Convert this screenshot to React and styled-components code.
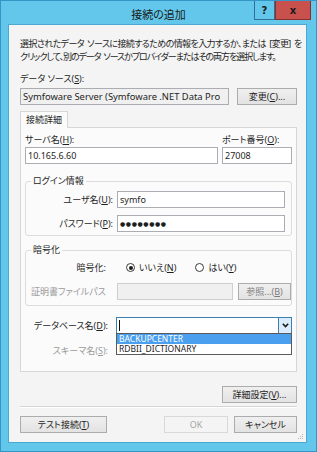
import styled, {createGlobalStyle} from "styled-components";

const GlobalStyle = createGlobalStyle`
  html, body { margin: 0; padding: 0; }
  body { width: 317px; height: 452px; overflow: hidden; background: #fff; }
  * { box-sizing: border-box; }
`

const Window = styled.div`
  width: 317px;
  height: 452px;
  background: #62c7ea;
  border: 1px solid #3595c6;
  display: flex;
  flex-direction: column;
  font-family: "Noto Sans", "Noto Sans CJK JP", sans-serif;
  font-size: 9px;
  font-feature-settings: "palt";
  color: #1e1e1e;
`
const TitleBar = styled.div`
  height: 23px;
  display: grid;
  grid-template-columns: 1fr auto 1fr;
`
const Title = styled.div`
  grid-column: 2;
  align-self: center;
  font-size: 11px;
  color: #1a1a1a;
  padding-top: 2px;
`
const Caption = styled.div`
  grid-column: 3;
  justify-self: end;
  align-self: start;
  display: flex;
  margin-right: 5px;
`
const CaptionButton = styled.div`
  width: ${({wide}) => wide ? 36 : 21}px;
  height: 19px;
  display: flex;
  align-items: center;
  justify-content: center;
  background: ${({close}) => close ? "#c9514d" : "#62c7ea"};
  border: 1px solid ${({close}) => close ? "#86302d" : "#2f7196"};
  border-top: none;
  font-family: "DejaVu Sans", sans-serif;
  font-weight: bold;
  font-size: 10px;
  color: #1b1b1b;
`
const Client = styled.div`
  position: relative;
  flex: 1;
  margin: 0 9px 8px 7px;
  background: #f4f4f4;
  border: 1px solid #4aa8d2;
  padding: 12px 9px 0 11px;
  display: flex;
  flex-direction: column;
`
const Desc = styled.p`
  margin: 0;
  line-height: 13px;
  white-space: nowrap;
  letter-spacing: ${({tight}) => tight}px;
  word-spacing: 1.5px;
`
const Label = styled.div`
  line-height: 13px;
  margin-top: ${({top}) => top || 0}px;
  color: ${({disabled}) => disabled ? "#9a9a9a" : "inherit"};
  text-align: ${({align}) => align || "left"};
  padding-right: ${({pr}) => pr || 0}px;
  padding-left: ${({pl}) => pl || 0}px;
  white-space: nowrap;
`
const SourceRow = styled.div`
  display: flex;
  align-items: center;
  gap: 8px;
  margin-top: 2px;
  height: 19px;
`
const TextBox = styled.div`
  width: ${({w}) => w ? `${w}px` : "auto"};
  height: 17px;
  background: ${({readOnly, disabled}) => readOnly || disabled ? "#f0f0f0" : "#fff"};
  border: 1px solid ${({disabled}) => disabled ? "#cfcfcf" : "#abadb3"};
  padding: 0 2px;
  line-height: 15px;
  white-space: nowrap;
  overflow: hidden;
  font-size: ${({latin}) => latin ? "9.4px" : "inherit"};
`
const Dots = styled.span`
  font-family: "DejaVu Sans", sans-serif;
  font-size: 6px;
  letter-spacing: 0.6px;
  vertical-align: 1px;
`
const Button = styled.div`
  width: ${({w}) => w}px;
  height: 17px;
  display: flex;
  align-items: center;
  justify-content: center;
  background: ${({disabled}) => disabled ? "#f4f4f4" : "linear-gradient(#efefef, #e3e3e3)"};
  border: 1px solid ${({disabled}) => disabled ? "#d9d9d9" : "#acacac"};
  color: ${({disabled, dim}) => disabled ? "#a6a6a6" : dim ? "#7d7d7d" : "#1e1e1e"};
  white-space: nowrap;
`
const TabStrip = styled.div`
  display: flex;
  margin-top: 5px;
`
const Tab = styled.div`
  height: 17px;
  padding: 0 5px;
  line-height: 16px;
  background: #fbfbfb;
  border: 1px solid #d7d7d7;
  border-bottom: none;
  margin-bottom: -1px;
  position: relative;
  z-index: 1;
`
const Panel = styled.div`
  height: 245px;
  background: #fbfbfb;
  border: 1px solid #d7d7d7;
  padding: 5px 4px 0;
  display: flex;
  flex-direction: column;
`
const ServerGrid = styled.div`
  display: grid;
  grid-template-columns: 1fr 70px;
  column-gap: 4px;
  row-gap: 1px;
`
const Group = styled.fieldset`
  margin: ${({top}) => top}px 0 0;
  padding: 0 6px ${({pb}) => pb}px 2px;
  border: 1px solid #dcdcdc;
  border-radius: 3px;
  min-width: 0;
`
const Legend = styled.legend`
  padding: 0 2px;
  margin-left: 3px;
  line-height: 12px;
`
const FormRow = styled.div`
  display: grid;
  grid-template-columns: ${({col}) => col || 85}px 1fr;
  column-gap: 4px;
  align-items: center;
  height: 17px;
  margin-top: ${({top}) => top || 0}px;
`
const Inline = styled.div`
  display: flex;
  align-items: center;
  gap: 5px;
`
const RadioGroup = styled.div`
  display: flex;
  align-items: center;
  gap: 19px;
  margin-left: 9px;
`
const RadioItem = styled.label`
  display: flex;
  align-items: center;
  gap: 4px;
`
const RadioDot = styled.span`
  width: 9px;
  height: 9px;
  border-radius: 50%;
  border: 1px solid #3a3a3a;
  background: #fff;
  display: flex;
  align-items: center;
  justify-content: center;
  &::after {
    content: "";
    width: 4px;
    height: 4px;
    border-radius: 50%;
    background: ${({checked}) => checked ? "#1a1a1a" : "transparent"};
  }
`
const Combo = styled.div`
  position: relative;
  height: 17px;
  display: flex;
  background: #fff;
  border: 1px solid #3c7fb1;
`
const ComboText = styled.div`
  flex: 1;
  display: flex;
  align-items: center;
  padding-left: 2px;
`
const Caret = styled.span`
  width: 1px;
  height: 11px;
  background: #111;
`
const DropButton = styled.div`
  width: 13px;
  display: flex;
  align-items: center;
  justify-content: center;
  background: #dcecfc;
  border-left: 1px solid #3c7fb1;
`
const DropList = styled.div`
  position: absolute;
  top: 100%;
  left: -1px;
  right: -1px;
  background: #fff;
  border: 1px solid #5a5a5a;
  z-index: 2;
`
const DropItem = styled.div`
  height: 10px;
  line-height: 10px;
  padding-left: 2px;
  font-size: 8.5px;
  background: ${({active}) => active ? "#4aa0ee" : "#fff"};
  color: ${({active}) => active ? "#fff" : "#1e1e1e"};
`
const RightRow = styled.div`
  display: flex;
  justify-content: flex-end;
  margin-top: 14px;
`
const Separator = styled.div`
  height: 2px;
  margin-top: 3px;
  border-top: 1px solid #d5d5d5;
  border-bottom: 1px solid #fff;
`
const Footer = styled.div`
  display: flex;
  gap: 6px;
  margin-top: 8px;
`
const Spacer = styled.div`
  flex: 1;
`
const Grip = styled.svg`
  position: absolute;
  right: 2px;
  bottom: 2px;
`

export default function App(){
    return(
        <>
            <GlobalStyle/>
            <Window>
                <TitleBar>
                    <Title>接続の追加</Title>
                    <Caption>
                        <CaptionButton>?</CaptionButton>
                        <CaptionButton wide close>x</CaptionButton>
                    </Caption>
                </TitleBar>
                <Client>
                    <Desc tight={-0.6}>選択されたデータ ソースに接続するための情報を入力するか、または [変更] を</Desc>
                    <Desc tight={-1.05}>クリックして、別のデータ ソースかプロバイダーまたはその両方を選択します。</Desc>
                    <Label top={9}>データ ソース(<u>S</u>):</Label>
                    <SourceRow>
                        <TextBox w={209} readOnly latin>Symfoware Server (Symfoware .NET Data Pro</TextBox>
                        <Button w={60}>変更(<u>C</u>)...</Button>
                    </SourceRow>
                    <TabStrip>
                        <Tab>接続詳細</Tab>
                    </TabStrip>
                    <Panel>
                        <ServerGrid>
                            <Label>サーバ名(<u>H</u>):</Label>
                            <Label>ポート番号(<u>O</u>):</Label>
                            <TextBox>10.165.6.60</TextBox>
                            <TextBox>27008</TextBox>
                        </ServerGrid>
                        <Group top={11} pb={3}>
                            <Legend>ログイン情報</Legend>
                            <FormRow top={4}>
                                <Label align="right">ユーザ名(<u>U</u>):</Label>
                                <TextBox>symfo</TextBox>
                            </FormRow>
                            <FormRow top={7}>
                                <Label align="right">パスワード(<u>P</u>):</Label>
                                <TextBox><Dots>●●●●●●●●</Dots></TextBox>
                            </FormRow>
                        </Group>
                        <Group top={8} pb={5}>
                            <Legend>暗号化</Legend>
                            <FormRow top={3}>
                                <Label align="right" pr={7}>暗号化:</Label>
                                <RadioGroup>
                                    <RadioItem><RadioDot checked/><span>いいえ(<u>N</u>)</span></RadioItem>
                                    <RadioItem><RadioDot/><span>はい(<u>Y</u>)</span></RadioItem>
                                </RadioGroup>
                            </FormRow>
                            <FormRow top={7}>
                                <Label disabled pl={3}>証明書ファイルパス</Label>
                                <Inline>
                                    <TextBox w={116} disabled/>
                                    <Button w={53} dim>参照...(<u>B</u>)</Button>
                                </Inline>
                            </FormRow>
                        </Group>
                        <FormRow col={87} top={11}>
                            <Label align="right" pr={4}>データベース名(<u>D</u>):</Label>
                            <Combo>
                                <ComboText><Caret/></ComboText>
                                <DropButton>
                                    <svg width="7" height="5" viewBox="0 0 7 5">
                                        <polyline points="0.8,0.8 3.5,3.6 6.2,0.8" fill="none" stroke="#1a1a1a" strokeWidth="1.6"/>
                                    </svg>
                                </DropButton>
                                <DropList>
                                    <DropItem active>BACKUPCENTER</DropItem>
                                    <DropItem>RDBII_DICTIONARY</DropItem>
                                </DropList>
                            </Combo>
                        </FormRow>
                        <FormRow col={87} top={8}>
                            <Label align="right" pr={4} disabled>スキーマ名(<u>S</u>):</Label>
                        </FormRow>
                    </Panel>
                    <RightRow>
                        <Button w={75}>詳細設定(<u>V</u>)...</Button>
                    </RightRow>
                    <Separator/>
                    <Footer>
                        <Button w={87}>テスト接続(<u>T</u>)</Button>
                        <Spacer/>
                        <Button w={64} disabled>OK</Button>
                        <Button w={63}>キャンセル</Button>
                    </Footer>
                    <Grip width="7" height="7" viewBox="0 0 7 7">
                        <rect x="5" y="1" width="1" height="1" fill="#b5b5b5"/>
                        <rect x="3" y="3" width="1" height="1" fill="#b5b5b5"/>
                        <rect x="5" y="3" width="1" height="1" fill="#b5b5b5"/>
                        <rect x="1" y="5" width="1" height="1" fill="#b5b5b5"/>
                        <rect x="3" y="5" width="1" height="1" fill="#b5b5b5"/>
                        <rect x="5" y="5" width="1" height="1" fill="#b5b5b5"/>
                    </Grip>
                </Client>
            </Window>
        </>
    )
}
